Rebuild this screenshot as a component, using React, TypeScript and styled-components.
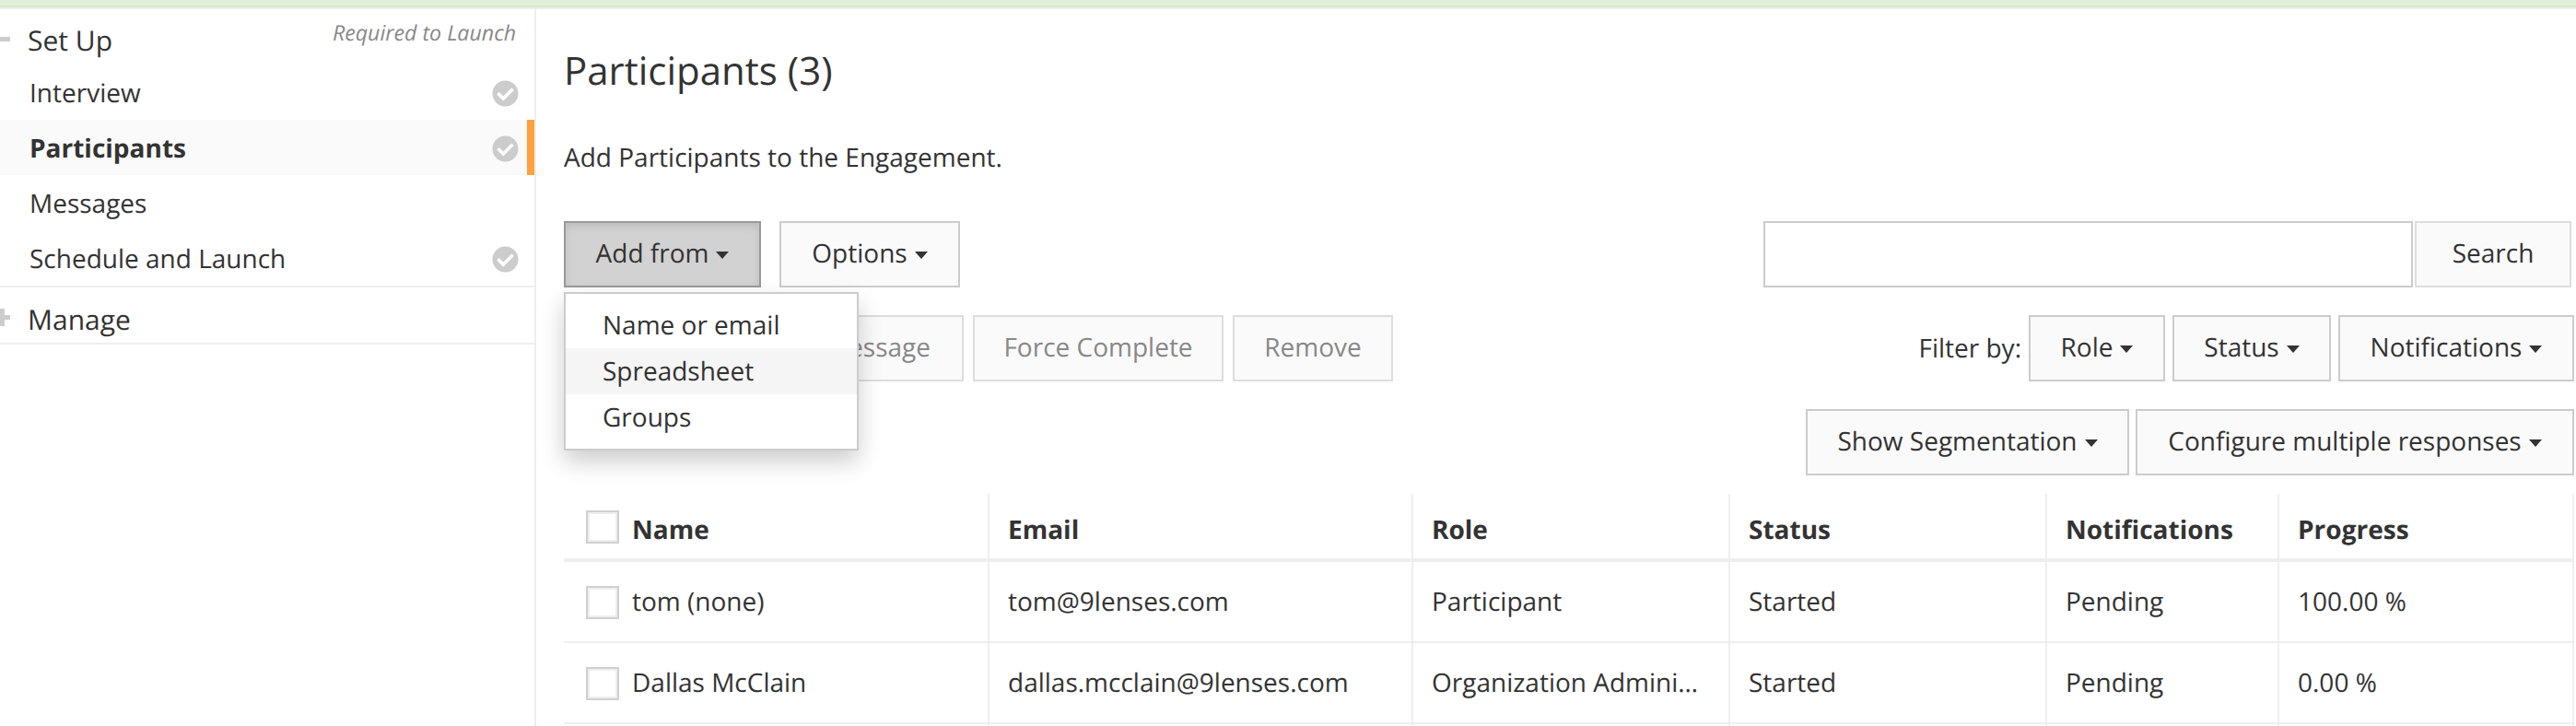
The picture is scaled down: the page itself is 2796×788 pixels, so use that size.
import * as React from 'react';
import styled, { createGlobalStyle } from 'styled-components';
import { FaCheckCircle } from 'react-icons/fa';

const GlobalStyle = createGlobalStyle`
  html, body {
    margin: 0;
    padding: 0;
    background: #fff;
    overflow: hidden;
  }
  * {
    box-sizing: border-box;
  }
`;

const Page = styled.div`
  width: 2796px;
  height: 788px;
  overflow: hidden;
  font-family: "Open Sans", "Liberation Sans", sans-serif;
  font-size: 28px;
  color: #333;
  text-rendering: geometricPrecision;
`;

const StatusBar = styled.div`
  height: 10px;
  background: #dff0d8;
  border-bottom: 2px solid #eee;
  box-shadow: inset 0 -2px 0 #d6e9c6;
`;

const Body = styled.div`
  display: flex;
  height: 778px;
`;

const Sidebar = styled.nav`
  width: 582px;
  flex: none;
  border-right: 2px solid #eee;
`;

const Section = styled.div`
  border-bottom: 2px solid #eee;
`;

const SectionHead = styled.div`
  height: 60px;
  display: flex;
  align-items: center;
  justify-content: space-between;
  padding: 0 20px 0 0;
`;

const SectionTitle = styled.div`
  display: flex;
  align-items: center;
  gap: 19px;
  font-size: 30px;
`;

const SectionLabel = styled.span<{ $drop: number }>`
  padding-top: ${(p) => p.$drop}px;
`;

const Toggle = styled.svg`
  width: 11px;
  height: 24px;
  flex: none;
  fill: #ccc;
`;

const RequiredNote = styled.div`
  font-size: 23.2px;
  font-style: italic;
  color: #888;
  align-self: flex-start;
  margin-top: 9px;
`;

const NavRow = styled.div<{ $active?: boolean }>`
  height: 60px;
  display: flex;
  align-items: center;
  justify-content: space-between;
  padding: 2px ${(p) => (p.$active ? 9 : 17)}px 0 32px;
  font-weight: ${(p) => (p.$active ? 700 : 400)};
  background: ${(p) => (p.$active ? '#fafafa' : 'transparent')};
  border-right: ${(p) => (p.$active ? '8px solid #ffa23e' : 'none')};
  svg {
    color: #ccc;
    font-size: 29px;
  }
`;

const Main = styled.main`
  flex: 1;
  min-width: 0;
  padding: 0 2px 0 30px;
`;

const Title = styled.h1`
  margin: 0;
  height: 130px;
  padding-top: 40px;
  font-size: 42px;
  font-weight: 400;
  line-height: 54px;
`;

const Intro = styled.p`
  margin: 0;
  height: 100px;
  padding-top: 11px;
  line-height: 40px;
`;

const ToolRow = styled.div`
  display: flex;
  justify-content: space-between;
  align-items: center;
  margin-bottom: 30px;
`;

const RightRow = styled(ToolRow)`
  justify-content: flex-end;
  gap: 7px;
  margin-bottom: 20px;
`;

const Group = styled.div<{ $gap: number }>`
  display: flex;
  align-items: center;
  gap: ${(p) => p.$gap}px;
`;

const Button = styled.button<{ $width: number; $pressed?: boolean; $muted?: boolean }>`
  width: ${(p) => p.$width}px;
  height: 72px;
  flex: none;
  padding: 0 0 2px;
  font-family: inherit;
  font-size: 28px;
  text-rendering: inherit;
  color: ${(p) => (p.$muted ? '#888' : '#333')};
  background: ${(p) => (p.$pressed ? '#d2d2d2' : '#fafafa')};
  border: 2px solid ${(p) => (p.$pressed ? '#999' : p.$muted ? '#ddd' : '#ccc')};
  box-shadow: ${(p) => (p.$pressed ? 'inset 0 4px 8px rgba(0, 0, 0, 0.1)' : 'none')};
  display: inline-flex;
  align-items: center;
  justify-content: center;
  border-radius: 0;
`;

// its left half sits under the open dropdown
const SendButton = styled(Button)`
  justify-content: flex-end;
  padding-right: 34px;
`;

const Caret = styled.span`
  display: inline-block;
  width: 0;
  height: 0;
  margin-left: 8px;
  margin-top: 4px;
  border-top: 8px solid #333;
  border-left: 7px solid transparent;
  border-right: 7px solid transparent;
`;

const AddFromWrap = styled.div`
  position: relative;
`;

const Dropdown = styled.ul`
  position: absolute;
  z-index: 5;
  top: 77px;
  left: 0;
  width: 320px;
  margin: 0;
  padding: 9px 0;
  list-style: none;
  background: #fff;
  border: 2px solid #ccc;
  box-shadow: 0 12px 24px rgba(0, 0, 0, 0.2);
`;

const DropdownItem = styled.li<{ $active?: boolean }>`
  height: 50px;
  line-height: 50px;
  padding-left: 40px;
  background: ${(p) => (p.$active ? '#f5f5f5' : 'transparent')};
`;

const SearchBox = styled.div`
  display: flex;
  gap: 2px;
  margin-right: 3px;
`;

const SearchInput = styled.input`
  width: 705px;
  height: 72px;
  border: 2px solid #ccc;
  background: #fff;
  outline: none;
`;

const SearchButton = styled(Button)`
  border-color: #ddd;
`;

const Table = styled.table`
  width: 2182px;
  margin-top: 20px;
  border-collapse: separate;
  border-spacing: 0;
  table-layout: fixed;
`;

const HeadCell = styled.th`
  height: 74px;
  padding: 0 20px;
  text-align: left;
  font-weight: 700;
  border-right: 2px solid #eee;
  border-bottom: 4px solid #eee;
`;

const HeadLabel = styled.span`
  display: inline-block;
  padding-top: 7px;
`;

const Cell = styled.td`
  height: 88px;
  padding: 0 20px;
  border-right: 2px solid #eee;
  border-bottom: 2px solid #eee;
  white-space: nowrap;
  overflow: hidden;
  text-overflow: ellipsis;
`;

const NameWrap = styled.div`
  display: flex;
  align-items: center;
  gap: 14px;
  padding-left: 4px;
`;

const Checkbox = styled.span`
  display: block;
  width: 36px;
  height: 36px;
  flex: none;
  margin-top: 2px;
  background: #fff;
  border: 2px solid #d0d0d0;
  box-shadow: inset 0 0 0 2px #eee;
`;

const columns = [462, 460, 344, 344, 252, 320];

const headings = ['Email', 'Role', 'Status', 'Notifications', 'Progress'];

const people = [
  { name: 'tom (none)', email: 'tom@9lenses.com', role: 'Participant', status: 'Started', notifications: 'Pending', progress: '100.00 %' },
  { name: 'Dallas McClain', email: 'dallas.mcclain@9lenses.com', role: 'Organization Administrator', status: 'Started', notifications: 'Pending', progress: '0.00 %' },
];

export default function App() {
  return (
    <Page>
      <GlobalStyle />
      <StatusBar />
      <Body>
        <Sidebar>
          <Section>
            <SectionHead>
              <SectionTitle>
                <Toggle viewBox="0 0 11 24">
                  <rect x="0" y="12" width="11" height="5" />
                </Toggle>
                <SectionLabel $drop={7}>Set Up</SectionLabel>
              </SectionTitle>
              <RequiredNote>Required to Launch</RequiredNote>
            </SectionHead>
            <NavRow>
              Interview
              <FaCheckCircle />
            </NavRow>
            <NavRow $active>
              Participants
              <FaCheckCircle />
            </NavRow>
            <NavRow>Messages</NavRow>
            <NavRow>
              Schedule and Launch
              <FaCheckCircle />
            </NavRow>
          </Section>
          <Section>
            <SectionHead>
              <SectionTitle>
                <Toggle viewBox="0 0 11 24">
                  <rect x="0" y="12" width="11" height="5" />
                  <rect x="0" y="5" width="5" height="19" />
                </Toggle>
                <SectionLabel $drop={8}>Manage</SectionLabel>
              </SectionTitle>
            </SectionHead>
          </Section>
        </Sidebar>
        <Main>
          <Title>Participants (3)</Title>
          <Intro>Add Participants to the Engagement.</Intro>
          <ToolRow>
            <Group $gap={20}>
              <AddFromWrap>
                <Button $width={214} $pressed>
                  Add from
                  <Caret />
                </Button>
                <Dropdown>
                  <DropdownItem>Name or email</DropdownItem>
                  <DropdownItem $active>Spreadsheet</DropdownItem>
                  <DropdownItem>Groups</DropdownItem>
                </Dropdown>
              </AddFromWrap>
              <Button $width={196}>
                Options
                <Caret />
              </Button>
            </Group>
            <SearchBox>
              <SearchInput />
              <SearchButton $width={170}>Search</SearchButton>
            </SearchBox>
          </ToolRow>
          <ToolRow>
            <Group $gap={10}>
              <SendButton $width={434} $muted>Send Message</SendButton>
              <Button $width={272} $muted>Force Complete</Button>
              <Button $width={174} $muted>Remove</Button>
            </Group>
            <Group $gap={8}>
              <span>Filter by:</span>
              <Button $width={148}>
                Role
                <Caret />
              </Button>
              <Button $width={172}>
                Status
                <Caret />
              </Button>
              <Button $width={256}>
                Notifications
                <Caret />
              </Button>
            </Group>
          </ToolRow>
          <RightRow>
            <Button $width={351}>
              Show Segmentation
              <Caret />
            </Button>
            <Button $width={476}>
              Configure multiple responses
              <Caret />
            </Button>
          </RightRow>
          <Table>
            <colgroup>
              {columns.map((w, i) => (
                <col key={i} style={{ width: w }} />
              ))}
            </colgroup>
            <thead>
              <tr>
                <HeadCell>
                  <NameWrap>
                    <Checkbox />
                    <HeadLabel>Name</HeadLabel>
                  </NameWrap>
                </HeadCell>
                {headings.map((h) => (
                  <HeadCell key={h}>
                    <HeadLabel>{h}</HeadLabel>
                  </HeadCell>
                ))}
              </tr>
            </thead>
            <tbody>
              {people.map((p) => (
                <tr key={p.email}>
                  <Cell>
                    <NameWrap>
                      <Checkbox />
                      {p.name}
                    </NameWrap>
                  </Cell>
                  <Cell>{p.email}</Cell>
                  <Cell>{p.role}</Cell>
                  <Cell>{p.status}</Cell>
                  <Cell>{p.notifications}</Cell>
                  <Cell>{p.progress}</Cell>
                </tr>
              ))}
              <tr>
                {columns.map((w, i) => (
                  <Cell key={i} />
                ))}
              </tr>
            </tbody>
          </Table>
        </Main>
      </Body>
    </Page>
  );
}
